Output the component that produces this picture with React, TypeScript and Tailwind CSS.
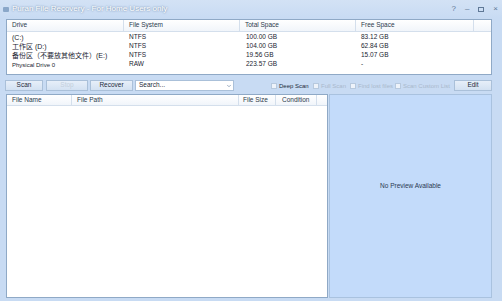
import { ChevronDown } from "lucide-react"

const drives = [
  { name: "(C:)", fs: "NTFS", total: "100.00 GB", free: "83.12 GB" },
  { name: "工作区 (D:)", fs: "NTFS", total: "104.00 GB", free: "62.84 GB" },
  { name: "备份区（不要放其他文件）(E:)", fs: "NTFS", total: "19.56 GB", free: "15.07 GB" },
  { name: "Physical Drive 0", fs: "RAW", total: "223.57 GB", free: "-" },
]

function Check({ label, disabled, className = "" }: { label: string; disabled?: boolean; className?: string }) {
  return (
    <div className={"shrink-0 flex items-center gap-[2px] whitespace-nowrap " + className}>
      <span className="shrink-0 w-[6px] h-[6px] border border-[#b7c9de] bg-[#eef3fa]" />
      <span className={disabled ? "text-[#a9b9cc]" : "text-[#1d2a3a]"}>{label}</span>
    </div>
  )
}

function Btn({ label, disabled, className = "" }: { label: string; disabled?: boolean; className?: string }) {
  return (
    <div
      className={
        "shrink-0 h-[11px] flex items-center justify-center border border-[#aac0d9] bg-gradient-to-b from-[#e7eff9] to-[#d3e1f2] " +
        (disabled ? "text-[#c3cfdc] " : "text-[#1d2a3a] ") +
        className
      }
    >
      {label}
    </div>
  )
}

export default function App() {
  return (
    <div
      className="w-[502px] h-[301px] bg-[#c8dbf3] flex flex-col overflow-hidden text-[6.5px] leading-none"
      style={{ fontFamily: '"Liberation Sans", "Noto Sans CJK SC", sans-serif' }}
    >
      {/* title bar */}
      <div className="h-[18px] flex items-center pl-[3px] pr-[4px] bg-gradient-to-b from-[#d3e2f5] to-[#c8dbf3]">
        <span className="w-[6px] h-[5px] bg-[#8aa7c9] mr-[3px] rounded-[1px]" />
        <span className="text-[8px] text-white [text-shadow:0_0_2px_#4d6a8c]">
          Puran File Recovery - For Home Users only
        </span>
        <div className="ml-auto flex items-center gap-[9px] text-[8px] text-[#5f7896]">
          <span>?</span>
          <span>–</span>
          <span className="w-[6px] h-[5px] border border-[#5f7896]" />
          <span>×</span>
        </div>
      </div>

      <div className="flex-1 flex flex-col pl-[6px] pr-[10px] pb-[3px]">
        {/* drive list */}
        <div className="mt-[1px] h-[56px] bg-white border border-[#8fa9c6] flex flex-col">
          <div className="h-[12px] flex items-center border-b border-[#d4dfec] bg-gradient-to-b from-white to-[#f1f5fa] text-[#2b3a4c]">
            <div className="w-[117px] pl-[5px] border-r border-[#d4dfec] h-full flex items-center">Drive</div>
            <div className="w-[116px] pl-[5px] border-r border-[#d4dfec] h-full flex items-center">File System</div>
            <div className="w-[116px] pl-[5px] border-r border-[#d4dfec] h-full flex items-center">Total Space</div>
            <div className="w-[118px] pl-[5px] border-r border-[#d4dfec] h-full flex items-center">Free Space</div>
          </div>
          <div className="pt-[1px]">
            {drives.map((d) => (
              <div key={d.name} className="h-[9px] flex items-center text-[#1a2430]">
                <div className={"w-[117px] pl-[5px] whitespace-nowrap " + (d.name.startsWith("Physical") ? "text-[6px]" : "text-[7px]")}>
                  {d.name}
                </div>
                <div className="w-[116px] pl-[5px]">{d.fs}</div>
                <div className="w-[116px] pl-[6px]">{d.total}</div>
                <div className="w-[118px] pl-[5px]">{d.free}</div>
              </div>
            ))}
          </div>
        </div>

        {/* toolbar */}
        <div className="mt-[4px] h-[13px] flex items-center">
          <Btn label="Scan" className="w-[38px] ml-[-1px]" />
          <Btn label="Stop" disabled className="w-[42px] ml-[3px]" />
          <Btn label="Recover" className="w-[43px] ml-[2px]" />
          <div className="shrink-0 ml-[2px] w-[99px] h-[11px] bg-white border border-[#aac0d9] flex items-center pl-[3px] text-[#1d2a3a]">
            <span>Search...</span>
            <ChevronDown className="ml-auto mr-[1px] w-[6px] h-[6px] text-[#7d93ad]" strokeWidth={3} />
          </div>
          <div className="ml-[37px] flex items-center text-[6px]">
            <Check label="Deep Scan" className="w-[42px]" />
            <Check label="Full Scan" disabled className="w-[37px]" />
            <Check label="Find lost files" disabled className="w-[45px]" />
            <Check label="Scan Custom List" disabled className="w-[50px]" />
          </div>
          <Btn label="Edit" className="w-[38px] ml-auto" />
        </div>

        {/* file list + preview */}
        <div className="mt-[2px] flex-1 flex gap-[1px]">
          <div className="w-[322px] bg-white border border-[#8fa9c6] flex flex-col">
            <div className="h-[11px] flex items-center border-b border-[#d4dfec] bg-gradient-to-b from-white to-[#f1f5fa] text-[#2b3a4c]">
              <div className="w-[65px] pl-[5px] border-r border-[#d4dfec] h-full flex items-center">File Name</div>
              <div className="w-[167px] pl-[5px] border-r border-[#d4dfec] h-full flex items-center">File Path</div>
              <div className="w-[37px] pl-[4px] border-r border-[#d4dfec] h-full flex items-center">File Size</div>
              <div className="w-[41px] pl-[6px] border-r border-[#d4dfec] h-full flex items-center">Condition</div>
            </div>
          </div>
          <div className="flex-1 bg-[#c3dbfa] border border-[#a9c2df] flex items-center justify-center pb-[20px] text-[#2a3a52]">
            No Preview Available
          </div>
        </div>
      </div>
    </div>
  )
}
